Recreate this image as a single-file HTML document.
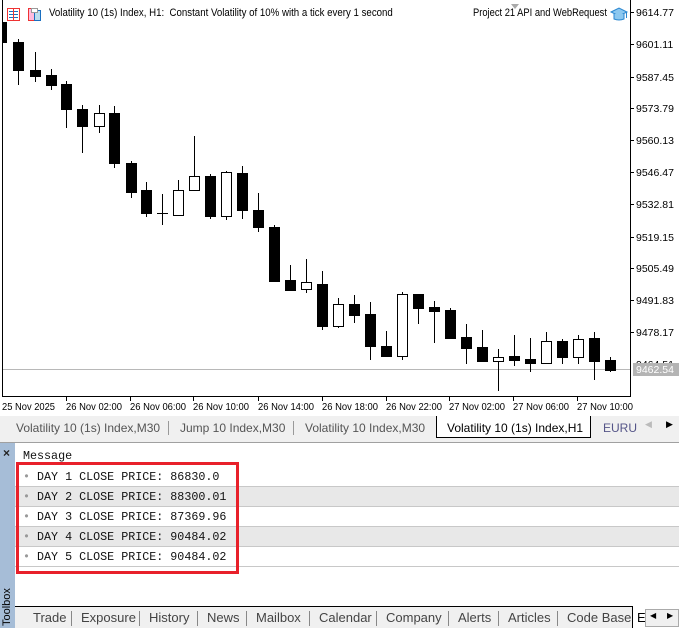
<!DOCTYPE html><html><head><meta charset="utf-8"><style>
*{margin:0;padding:0;box-sizing:border-box}
body{width:679px;height:628px;overflow:hidden;background:#fff;font-family:"Liberation Sans",sans-serif;position:relative}
.a{position:absolute;white-space:nowrap}
.t{font-size:11px;color:#000;transform-origin:0 0}
.tab{font-size:12px;color:#555;top:421px}
.bt{font-size:13px;color:#444;top:610px}
.mono{font-family:"Liberation Mono",monospace;font-size:11.7px;color:#111}
.row{position:absolute;left:15px;width:664px;height:20px;border-bottom:1px solid #c8c8c8}
</style></head><body>
<svg class="a" style="left:0;top:0" width="679" height="416">
<g stroke="#000" stroke-width="1">
<line x1="2.5" y1="0" x2="2.5" y2="396"/><line x1="630.5" y1="0" x2="630.5" y2="396"/>
<line x1="2" y1="396.5" x2="631" y2="396.5"/>
</g>
<line x1="3" y1="369.5" x2="630" y2="369.5" stroke="#b8b8b8"/>
<rect x="3" y="22" width="4" height="21" fill="#000"/>
<g font-family="Liberation Sans" font-size="10.5" fill="#000">
<text x="636" y="16">9614.77</text><text x="636" y="48">9601.11</text><text x="636" y="81">9587.45</text><text x="636" y="112">9573.79</text><text x="636" y="144">9560.13</text><text x="636" y="176">9546.47</text><text x="636" y="208">9532.81</text><text x="636" y="241">9519.15</text><text x="636" y="272">9505.49</text><text x="636" y="304">9491.83</text><text x="636" y="336">9478.17</text><text x="636" y="368">9464.51</text>
</g>
<rect x="633" y="363" width="46" height="13" fill="#b4b4b4"/>
<text x="636" y="373" font-family="Liberation Sans" font-size="10.5" fill="#fff">9462.54</text>
<g font-family="Liberation Sans" font-size="10.5" fill="#000" lengthAdjust="spacingAndGlyphs">
<text x="2" y="410" textLength="53" lengthAdjust="spacingAndGlyphs">25 Nov 2025</text>
<text x="66" y="410" textLength="56" lengthAdjust="spacingAndGlyphs">26 Nov 02:00</text>
<text x="130" y="410" textLength="56" lengthAdjust="spacingAndGlyphs">26 Nov 06:00</text>
<text x="193" y="410" textLength="56" lengthAdjust="spacingAndGlyphs">26 Nov 10:00</text>
<text x="258" y="410" textLength="56" lengthAdjust="spacingAndGlyphs">26 Nov 14:00</text>
<text x="322" y="410" textLength="56" lengthAdjust="spacingAndGlyphs">26 Nov 18:00</text>
<text x="386" y="410" textLength="56" lengthAdjust="spacingAndGlyphs">26 Nov 22:00</text>
<text x="449" y="410" textLength="56" lengthAdjust="spacingAndGlyphs">27 Nov 02:00</text>
<text x="513" y="410" textLength="56" lengthAdjust="spacingAndGlyphs">27 Nov 06:00</text>
<text x="577" y="410" textLength="56" lengthAdjust="spacingAndGlyphs">27 Nov 10:00</text>
</g>
<g stroke="#000"><line x1="66.5" y1="396" x2="66.5" y2="401"/><line x1="130.5" y1="396" x2="130.5" y2="401"/><line x1="193.5" y1="396" x2="193.5" y2="401"/><line x1="258.5" y1="396" x2="258.5" y2="401"/><line x1="322.5" y1="396" x2="322.5" y2="401"/><line x1="386.5" y1="396" x2="386.5" y2="401"/><line x1="449.5" y1="396" x2="449.5" y2="401"/><line x1="513.5" y1="396" x2="513.5" y2="401"/><line x1="577.5" y1="396" x2="577.5" y2="401"/></g>
<g stroke="#000">
<line x1="631" y1="12.5" x2="634" y2="12.5"/><line x1="631" y1="44.5" x2="634" y2="44.5"/><line x1="631" y1="77.5" x2="634" y2="77.5"/><line x1="631" y1="108.5" x2="634" y2="108.5"/><line x1="631" y1="140.5" x2="634" y2="140.5"/><line x1="631" y1="172.5" x2="634" y2="172.5"/><line x1="631" y1="204.5" x2="634" y2="204.5"/><line x1="631" y1="237.5" x2="634" y2="237.5"/><line x1="631" y1="268.5" x2="634" y2="268.5"/><line x1="631" y1="300.5" x2="634" y2="300.5"/><line x1="631" y1="332.5" x2="634" y2="332.5"/>
</g>
<polygon points="511,4 519,4 515,9" fill="#aaa"/>
<g stroke="#000" shape-rendering="crispEdges">
<line x1="18.5" y1="39" x2="18.5" y2="85"/><rect x="13.5" y="42.5" width="10" height="28" fill="#000"/>
<line x1="35.5" y1="52" x2="35.5" y2="82"/><rect x="30.5" y="70.5" width="10" height="6" fill="#000"/>
<line x1="51.5" y1="69" x2="51.5" y2="90"/><rect x="46.5" y="75.5" width="10" height="10" fill="#000"/>
<line x1="66.5" y1="81" x2="66.5" y2="128"/><rect x="61.5" y="84.5" width="10" height="25" fill="#000"/>
<line x1="82.5" y1="105" x2="82.5" y2="153"/><rect x="77.5" y="109.5" width="10" height="17" fill="#000"/>
<line x1="99.5" y1="105" x2="99.5" y2="133"/><rect x="94.5" y="113.5" width="10" height="13" fill="#fff"/>
<line x1="114.5" y1="106" x2="114.5" y2="168"/><rect x="109.5" y="113.5" width="10" height="50" fill="#000"/>
<line x1="131.5" y1="161" x2="131.5" y2="198"/><rect x="126.5" y="163.5" width="10" height="29" fill="#000"/>
<line x1="146.5" y1="182" x2="146.5" y2="217"/><rect x="141.5" y="190.5" width="10" height="23" fill="#000"/>
<line x1="162.5" y1="194" x2="162.5" y2="225"/><line x1="157" y1="213.5" x2="168" y2="213.5"/>
<line x1="178.5" y1="180" x2="178.5" y2="216"/><rect x="173.5" y="190.5" width="10" height="25" fill="#fff"/>
<line x1="194.5" y1="136" x2="194.5" y2="190"/><rect x="189.5" y="176.5" width="10" height="14" fill="#fff"/>
<line x1="210.5" y1="174" x2="210.5" y2="219"/><rect x="205.5" y="176.5" width="10" height="40" fill="#000"/>
<line x1="226.5" y1="171" x2="226.5" y2="220"/><rect x="221.5" y="172.5" width="10" height="44" fill="#fff"/>
<line x1="242.5" y1="166" x2="242.5" y2="219"/><rect x="237.5" y="173.5" width="10" height="37" fill="#000"/>
<line x1="258.5" y1="193" x2="258.5" y2="232"/><rect x="253.5" y="210.5" width="10" height="17" fill="#000"/>
<line x1="274.5" y1="225" x2="274.5" y2="282"/><rect x="269.5" y="227.5" width="10" height="54" fill="#000"/>
<line x1="290.5" y1="265" x2="290.5" y2="290"/><rect x="285.5" y="280.5" width="10" height="10" fill="#000"/>
<line x1="306.5" y1="259" x2="306.5" y2="293"/><rect x="301.5" y="282.5" width="10" height="7" fill="#fff"/>
<line x1="322.5" y1="271" x2="322.5" y2="330"/><rect x="317.5" y="284.5" width="10" height="42" fill="#000"/>
<line x1="338.5" y1="298" x2="338.5" y2="328"/><rect x="333.5" y="304.5" width="10" height="22" fill="#fff"/>
<line x1="354.5" y1="295" x2="354.5" y2="323"/><rect x="349.5" y="304.5" width="10" height="11" fill="#000"/>
<line x1="370.5" y1="302" x2="370.5" y2="360"/><rect x="365.5" y="314.5" width="10" height="32" fill="#000"/>
<line x1="386.5" y1="331" x2="386.5" y2="357"/><rect x="381.5" y="346.5" width="10" height="10" fill="#000"/>
<line x1="402.5" y1="292" x2="402.5" y2="360"/><rect x="397.5" y="294.5" width="10" height="62" fill="#fff"/>
<line x1="418.5" y1="294" x2="418.5" y2="324"/><rect x="413.5" y="294.5" width="10" height="14" fill="#000"/>
<line x1="434.5" y1="301" x2="434.5" y2="343"/><rect x="429.5" y="307.5" width="10" height="4" fill="#000"/>
<line x1="450.5" y1="308" x2="450.5" y2="339"/><rect x="445.5" y="310.5" width="10" height="28" fill="#000"/>
<line x1="466.5" y1="324" x2="466.5" y2="364"/><rect x="461.5" y="337.5" width="10" height="11" fill="#000"/>
<line x1="482.5" y1="330" x2="482.5" y2="362"/><rect x="477.5" y="347.5" width="10" height="14" fill="#000"/>
<line x1="498.5" y1="349" x2="498.5" y2="391"/><rect x="493.5" y="357.5" width="10" height="4" fill="#fff"/>
<line x1="514.5" y1="335" x2="514.5" y2="366"/><rect x="509.5" y="356.5" width="10" height="4" fill="#000"/>
<line x1="530.5" y1="338" x2="530.5" y2="372"/><rect x="525.5" y="359.5" width="10" height="4" fill="#000"/>
<line x1="546.5" y1="332" x2="546.5" y2="364"/><rect x="541.5" y="341.5" width="10" height="22" fill="#fff"/>
<line x1="562.5" y1="339" x2="562.5" y2="364"/><rect x="557.5" y="341.5" width="10" height="16" fill="#000"/>
<line x1="578.5" y1="335" x2="578.5" y2="364"/><rect x="573.5" y="339.5" width="10" height="18" fill="#fff"/>
<line x1="594.5" y1="332" x2="594.5" y2="380"/><rect x="589.5" y="338.5" width="10" height="23" fill="#000"/>
<line x1="610.5" y1="357" x2="610.5" y2="372"/><rect x="605.5" y="360.5" width="10" height="10" fill="#000"/>
</g>
<rect x="7.5" y="8.5" width="12" height="12" fill="#fff" stroke="#e33"/>
<g stroke="#1a6fc0"><line x1="9" y1="11.5" x2="18" y2="11.5"/><line x1="9" y1="14.5" x2="18" y2="14.5"/><line x1="9" y1="17.5" x2="18" y2="17.5"/></g>
<line x1="13.5" y1="9" x2="13.5" y2="20" stroke="#e33"/>
<rect x="28.5" y="8.5" width="6" height="12" fill="#fbd" stroke="#e33"/>
<rect x="34.5" y="10.5" width="6" height="10" fill="#bde" stroke="#1a6fc0"/>
<rect x="31.5" y="8.5" width="6" height="4" fill="#fff" stroke="#999"/>
<path d="M611 12 L619 8 L627 12 L619 16 Z" fill="#8cc8f0" stroke="#2a86d0"/>
<path d="M614 14 V19 Q619 21 624 19 V14" fill="#8cc8f0" stroke="#2a86d0"/>
<line x1="626.5" y1="12" x2="626.5" y2="18" stroke="#2a86d0"/>
</svg>
<div class="a t" style="left:49px;top:7px;transform:scaleX(0.88)">Volatility 10 (1s) Index, H1:&nbsp; Constant Volatility of 10% with a tick every 1 second</div>
<div class="a t" style="left:473px;top:7px;transform:scaleX(0.85)">Project 21 API and WebRequest</div>

<div class="a" style="left:0;top:416px;width:679px;height:22px;background:#f0f0f0"></div>
<div class="a" style="left:436px;top:416px;width:155px;height:22px;background:#fff;border:1px solid #000;border-top:none"></div>
<div class="a tab" style="left:16px">Volatility 10 (1s) Index,M30</div>
<div class="a" style="left:168px;top:421px;width:1px;height:14px;background:#999"></div>
<div class="a tab" style="left:180px">Jump 10 Index,M30</div>
<div class="a" style="left:293px;top:421px;width:1px;height:14px;background:#999"></div>
<div class="a tab" style="left:305px">Volatility 10 Index,M30</div>
<div class="a tab" style="left:447px;color:#000">Volatility 10 (1s) Index,H1</div>
<div class="a tab" style="left:603px;color:#558">EURU</div>
<div class="a" style="left:645px;top:419px;font-size:9px;color:#bbb">◀</div>
<div class="a" style="left:666px;top:419px;font-size:9px;color:#000">▶</div>
<div class="a" style="left:0;top:438px;width:679px;height:4px;background:#f0f0f0"></div>
<div class="a" style="left:0;top:442px;width:679px;height:1px;background:#a0a0a0"></div>

<div class="a" style="left:0;top:443px;width:15px;height:185px;background:#a6bdd7"></div>
<div class="a" style="left:3px;top:446px;font-size:12px;font-weight:bold;color:#222">×</div>
<div class="a" style="left:1px;top:626px;font-size:11px;color:#000;transform:rotate(-90deg);transform-origin:0 0">Toolbox</div>
<div class="a mono" style="left:23px;top:449px">Message</div>
<div class="row" style="top:467px;background:#fff"></div>
<div class="row" style="top:487px;background:#e8e8e8"></div>
<div class="row" style="top:507px;background:#fff"></div>
<div class="row" style="top:527px;background:#e8e8e8"></div>
<div class="row" style="top:547px;background:#fff"></div>
<div class="a mono" style="left:23px;top:470px"><span style="color:#999">•</span> DAY 1 CLOSE PRICE: 86830.0</div>
<div class="a mono" style="left:23px;top:490px"><span style="color:#999">•</span> DAY 2 CLOSE PRICE: 88300.01</div>
<div class="a mono" style="left:23px;top:510px"><span style="color:#999">•</span> DAY 3 CLOSE PRICE: 87369.96</div>
<div class="a mono" style="left:23px;top:530px"><span style="color:#999">•</span> DAY 4 CLOSE PRICE: 90484.02</div>
<div class="a mono" style="left:23px;top:550px"><span style="color:#999">•</span> DAY 5 CLOSE PRICE: 90484.02</div>
<div class="a" style="left:16px;top:462px;width:223px;height:112px;border:3px solid #e8202a"></div>

<div class="a" style="left:15px;top:606px;width:664px;height:22px;background:#f0f0f0;border-top:1px solid #000"></div>
<div class="a bt" style="left:33px">Trade</div>
<div class="a bt" style="left:81px">Exposure</div>
<div class="a bt" style="left:149px">History</div>
<div class="a bt" style="left:207px">News</div>
<div class="a bt" style="left:256px">Mailbox</div>
<div class="a bt" style="left:319px">Calendar</div>
<div class="a bt" style="left:386px">Company</div>
<div class="a bt" style="left:458px">Alerts</div>
<div class="a bt" style="left:508px">Articles</div>
<div class="a bt" style="left:567px">Code Base</div>
<div class="a" style="left:71px;top:611px;width:1px;height:15px;background:#888"></div>
<div class="a" style="left:139px;top:611px;width:1px;height:15px;background:#888"></div>
<div class="a" style="left:197px;top:611px;width:1px;height:15px;background:#888"></div>
<div class="a" style="left:246px;top:611px;width:1px;height:15px;background:#888"></div>
<div class="a" style="left:309px;top:611px;width:1px;height:15px;background:#888"></div>
<div class="a" style="left:376px;top:611px;width:1px;height:15px;background:#888"></div>
<div class="a" style="left:448px;top:611px;width:1px;height:15px;background:#888"></div>
<div class="a" style="left:498px;top:611px;width:1px;height:15px;background:#888"></div>
<div class="a" style="left:557px;top:611px;width:1px;height:15px;background:#888"></div>
<div class="a" style="left:632px;top:606px;width:47px;height:22px;background:#fff;border-left:1px solid #000"></div>
<div class="a bt" style="left:637px;color:#000">E</div>
<div class="a" style="left:645px;top:609px;width:34px;height:18px;background:#f0f0f0;border:1px solid #aaa"></div>
<div class="a" style="left:650px;top:611px;font-size:8px">◀</div>
<div class="a" style="left:667px;top:611px;font-size:8px">▶</div>
</body></html>
